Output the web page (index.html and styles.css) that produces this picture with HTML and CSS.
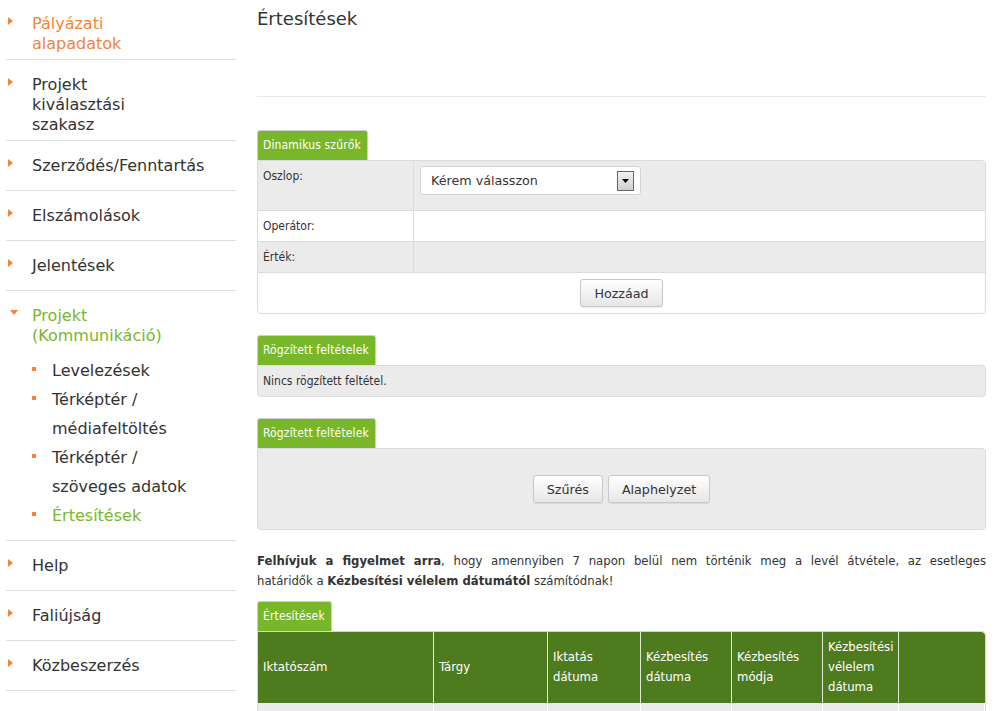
FILE: index.html
```html
<!DOCTYPE html>
<html lang="hu">
<head>
<meta charset="utf-8">
<title>Értesítések</title>
<link rel="stylesheet" href="styles.css">
</head>
<body>
<div class="page">
  <nav class="sidebar">
    <ul class="menu">
      <li class="menu-item first">
        <div class="menu-row"><span class="arrow"></span><div class="menu-body"><span class="label orange">Pályázati<br>alapadatok</span></div></div>
      </li>
      <li class="menu-item three">
        <div class="menu-row"><span class="arrow"></span><div class="menu-body"><span class="label">Projekt<br>kiválasztási<br>szakasz</span></div></div>
      </li>
      <li class="menu-item">
        <div class="menu-row"><span class="arrow"></span><div class="menu-body"><span class="label">Szerződés/Fenntartás</span></div></div>
      </li>
      <li class="menu-item">
        <div class="menu-row"><span class="arrow"></span><div class="menu-body"><span class="label">Elszámolások</span></div></div>
      </li>
      <li class="menu-item">
        <div class="menu-row"><span class="arrow"></span><div class="menu-body"><span class="label">Jelentések</span></div></div>
      </li>
      <li class="menu-item open">
        <div class="menu-row"><span class="arrow down"></span><div class="menu-body"><span class="label green">Projekt<br>(Kommunikáció)</span>
          <ul class="submenu">
            <li class="sub-item"><span class="bullet"></span><span>Levelezések</span></li>
            <li class="sub-item"><span class="bullet"></span><span>Térképtér /<br>médiafeltöltés</span></li>
            <li class="sub-item"><span class="bullet"></span><span>Térképtér /<br>szöveges adatok</span></li>
            <li class="sub-item active"><span class="bullet"></span><span>Értesítések</span></li>
          </ul>
        </div></div>
      </li>
      <li class="menu-item">
        <div class="menu-row"><span class="arrow"></span><div class="menu-body"><span class="label">Help</span></div></div>
      </li>
      <li class="menu-item">
        <div class="menu-row"><span class="arrow"></span><div class="menu-body"><span class="label">Faliújság</span></div></div>
      </li>
      <li class="menu-item">
        <div class="menu-row"><span class="arrow"></span><div class="menu-body"><span class="label">Közbeszerzés</span></div></div>
      </li>
    </ul>
  </nav>

  <main class="main">
    <h1 class="page-title">Értesítések</h1>

    <section class="box">
      <div class="tab">Dinamikus szűrők</div>
      <div class="panel filter-grid">
        <div class="cell label-cell shaded tall">Oszlop:</div>
        <div class="cell value-cell shaded tall">
          <div class="select">
            <span class="select-text">Kérem válasszon</span>
            <span class="select-btn"><svg width="7" height="4" viewBox="0 0 7 4"><path d="M0 0H7L3.5 4Z" fill="#000"/></svg></span>
          </div>
        </div>
        <div class="cell label-cell">Operátor:</div>
        <div class="cell value-cell"></div>
        <div class="cell label-cell shaded">Érték:</div>
        <div class="cell value-cell shaded"></div>
        <div class="cell actions">
          <button class="btn">Hozzáad</button>
        </div>
      </div>
    </section>

    <section class="box">
      <div class="tab">Rögzített feltételek</div>
      <div class="panel simple-panel">Nincs rögzített feltétel.</div>
    </section>

    <section class="box">
      <div class="tab">Rögzített feltételek</div>
      <div class="panel button-panel">
        <button class="btn">Szűrés</button>
        <button class="btn">Alaphelyzet</button>
      </div>
    </section>

    <p class="notice"><span class="notice-line"><strong>Felhívjuk a figyelmet arra</strong>, hogy amennyiben 7 napon belül nem történik meg a levél átvétele, az esetleges</span> határidők a <strong>Kézbesítési vélelem dátumától</strong> számítódnak!</p>

    <section class="box">
      <div class="tab">Értesítések</div>
      <table class="grid">
        <thead>
          <tr>
            <th class="c1">Iktatószám</th>
            <th class="c2">Tárgy</th>
            <th class="c3">Iktatás<br>dátuma</th>
            <th class="c4">Kézbesítés<br>dátuma</th>
            <th class="c5">Kézbesítés<br>módja</th>
            <th class="c6">Kézbesítési<br>vélelem<br>dátuma</th>
            <th class="c7"></th>
          </tr>
        </thead>
        <tbody>
          <tr><td></td><td></td><td></td><td></td><td></td><td></td><td></td></tr>
        </tbody>
      </table>
    </section>
  </main>
</div>
</body>
</html>
```

FILE: styles.css
```css
html, body {
  margin: 0;
  padding: 0;
  background: #fff;
}
body {
  font-family: "DejaVu Sans Condensed", "DejaVu Sans", sans-serif;
  color: #333;
}
.page {
  display: flex;
  align-items: flex-start;
}

/* Sidebar */
.sidebar {
  width: 230px;
  margin-left: 6px;
  flex: none;
  font-family: "DejaVu Sans", sans-serif;
}
.menu, .submenu {
  list-style: none;
  margin: 0;
  padding: 0;
}
.menu-item {
  border-bottom: 1px solid #dedede;
  padding: 15px 0 4px 0;
  min-height: 30px;
  font-size: 16px;
  line-height: 20px;
  color: #333;
}
.menu-item.first {
  padding-top: 14px;
  padding-bottom: 5px;
  min-height: 40px;
}
.menu-item.three {
  padding-bottom: 5px;
}
.menu-row {
  display: flex;
  align-items: flex-start;
}
.arrow {
  flex: none;
  width: 0;
  height: 0;
  margin: 3px 19px 0 2px;
  border-left: 5px solid #f5843a;
  border-top: 4px solid transparent;
  border-bottom: 4px solid transparent;
}
.arrow.down {
  margin: 4px 14px 0 4px;
  border-left: 4.5px solid transparent;
  border-right: 4.5px solid transparent;
  border-top: 5px solid #f5843a;
  border-bottom: 0;
}
.label { display: block; }
.orange { color: #f5843a; }
.green { color: #7ab62e; }
.submenu {
  margin: 10px 0 6px 0;
}
.sub-item {
  display: flex;
  align-items: flex-start;
  line-height: 29px;
  font-size: 16px;
}
.bullet {
  flex: none;
  width: 4px;
  height: 4px;
  background: #f5843a;
  margin: 11px 16px 0 0;
}
.sub-item.active { color: #7ab62e; }

/* Main */
.main {
  flex: none;
  width: 729px;
  margin-left: 21px;
  padding-top: 8px;
}
.page-title {
  margin: 0;
  font-family: "DejaVu Sans", sans-serif;
  font-size: 18px;
  line-height: 22px;
  font-weight: normal;
  color: #333;
  height: 88px;
  border-bottom: 1px solid #e8e8e8;
  margin-bottom: 33px;
}
.box {
  margin-bottom: 21px;
}
.tab {
  display: block;
  width: fit-content;
  background: #78b72a;
  color: #fff;
  font-size: 12px;
  line-height: 29px;
  height: 29px;
  padding: 0 6px 0 5px;
  border: 1px solid #cfcfcf;
  border-bottom: 0;
  border-radius: 3px 3px 0 0;
  letter-spacing: 0.15px;
}
.panel {
  border: 1px solid #dcdcdc;
  border-radius: 0 4px 4px 4px;
  font-size: 12px;
  color: #333;
}

.filter-grid {
  display: grid;
  grid-template-columns: 156px 1fr;
  overflow: hidden;
}
.cell {
  border-bottom: 1px solid #dcdcdc;
  height: 30px;
  box-sizing: content-box;
}
.cell.tall { height: 49px; }
.label-cell {
  border-right: 1px solid #dcdcdc;
  padding-left: 5px;
  line-height: 30px;
}
.shaded { background: #ebebeb; }
.value-cell { padding-left: 5px; }
.value-cell.tall { padding-top: 5px; height: 44px; }
.actions {
  grid-column: 1 / -1;
  border-bottom: 0;
  height: 40px;
  display: flex;
  align-items: center;
  justify-content: center;
}

.select {
  height: 27px;
  width: 203px;
  background: #fff;
  border: 1px solid #d4d4d4;
  border-radius: 3px;
  display: flex;
  align-items: center;
  justify-content: space-between;
  padding: 0 6px 0 10px;
  margin-left: 1px;
  box-sizing: content-box;
  font-family: "DejaVu Sans", sans-serif;
  font-size: 12.7px;
  color: #333;
}
.select-btn {
  width: 15px;
  height: 18px;
  border: 1px solid #666;
  background: linear-gradient(#f2f2f2, #d0d0d0);
  display: flex;
  align-items: center;
  justify-content: center;
}

.btn {
  font-family: "DejaVu Sans", sans-serif;
  font-size: 12.7px;
  color: #333;
  background: linear-gradient(#ffffff, #e6e6e6);
  border: 1px solid #c8c8c8;
  border-radius: 3px;
  height: 28px;
  padding: 0 13px;
  box-shadow: 0 1px 1px rgba(0,0,0,0.08);
}

.simple-panel {
  background: #ebebeb;
  line-height: 30px;
  padding-left: 5px;
}
.button-panel {
  background: #ebebeb;
  height: 82px;
  padding-top: 26px;
  box-sizing: border-box;
  display: flex;
  justify-content: center;
  align-items: flex-start;
  gap: 5px;
}

.notice {
  margin: 0 0 10px 0;
  font-size: 13px;
  line-height: 20px;
  text-align: justify;
  color: #333;
}
.notice-line {
  display: block;
  text-align-last: justify;
}
.notice strong { font-weight: bold; }

.grid {
  width: 100%;
  border-collapse: separate;
  border-spacing: 0;
  border: 1px solid #d6d6d6;
  border-radius: 0 4px 0 0;
  overflow: hidden;
  font-size: 13px;
}
.grid th {
  background: #4f7b1f;
  color: #fff;
  font-weight: normal;
  text-align: left;
  padding: 5px 5px 6px;
  line-height: 20px;
  border-right: 1px solid #e0e8d8;
  vertical-align: middle;
}
.grid th:last-child { border-right: 0; }
.grid th.c7 { border-top-right-radius: 4px; }
.c1 { width: 165px; }
.c2 { width: 103px; }
.c3 { width: 82px; }
.c4 { width: 80px; }
.c5 { width: 80px; }
.c6 { width: 65px; }
.grid td {
  background: #ebebeb;
  height: 30px;
  border-right: 1px solid #fff;
}
```
